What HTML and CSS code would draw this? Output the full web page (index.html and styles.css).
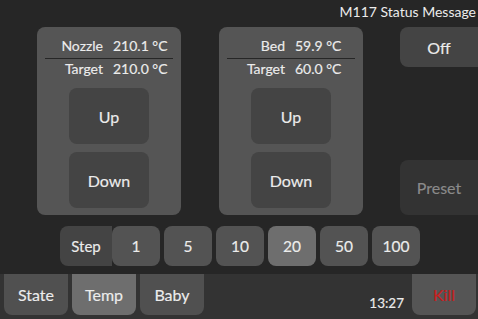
FILE: index.html
```html
<!DOCTYPE html>
<html lang="en">

<head>
    <meta charset="UTF-8" />
    <meta name="viewport" content="width=device-width, initial-scale=1.0" />
    <title>Temp</title>
    <link rel="stylesheet" href="styles.css">
</head>

<body>
    <div class="screen">
        <div class="main">
            <div class="status">M117 Status Message</div>

            <div class="content">
                <div class="panel">
                    <div class="readout">
                        <span class="label">Nozzle</span><span class="value">210.1 °C</span>
                    </div>
                    <div class="sep"></div>
                    <div class="readout">
                        <span class="label">Target</span><span class="value">210.0 °C</span>
                    </div>
                    <div class="btn big first">Up</div>
                    <div class="btn big">Down</div>
                </div>

                <div class="panel">
                    <div class="readout">
                        <span class="label">Bed</span><span class="value">59.9 °C</span>
                    </div>
                    <div class="sep"></div>
                    <div class="readout">
                        <span class="label">Target</span><span class="value">60.0 °C</span>
                    </div>
                    <div class="btn big first">Up</div>
                    <div class="btn big">Down</div>
                </div>

                <div class="side">
                    <div class="btn off">Off</div>
                    <div class="btn preset">Preset</div>
                </div>
            </div>

            <div class="steps">
                <div class="step-label">Step</div>
                <div class="btn step">1</div>
                <div class="btn step">5</div>
                <div class="btn step">10</div>
                <div class="btn step active">20</div>
                <div class="btn step">50</div>
                <div class="btn step">100</div>
            </div>
        </div>

        <!-- bottom bar -->
        <div class="bar">
            <div class="tab">State</div>
            <div class="tab active">Temp</div>
            <div class="tab">Baby</div>
            <div class="clock">13:27</div>
            <div class="tab kill">Kill</div>
        </div>
    </div>
</body>

</html>
```

FILE: styles.css
```css
* {
    box-sizing: border-box;
}

body {
    margin: 0;
    background-color: #262626;
    font-family: Lato, "Noto Sans", sans-serif;
    color: #ececec;
    overflow: hidden;
    -webkit-text-stroke: 0.15px;
}

.screen {
    width: 478px;
    height: 319px;
    display: flex;
    flex-direction: column;
}

.main {
    height: 274px;
}

.status {
    height: 27px;
    line-height: 24px;
    text-align: right;
    padding-right: 2px;
    font-size: 14px;
    -webkit-text-stroke: 0;
}

.content {
    display: flex;
    padding-left: 37px;
    gap: 38px;
    height: 188px;
}

.panel {
    width: 144px;
    background-color: #555555;
    border-radius: 8px;
    padding: 9px 8px 7px;
    display: flex;
    flex-direction: column;
    align-items: center;
}

.readout {
    display: grid;
    grid-template-columns: 58px 70px;
    column-gap: 10px;
    height: 20px;
    line-height: 20px;
    font-size: 14px;
    width: 128px;
}

.label {
    text-align: right;
}

.sep {
    width: 128px;
    height: 1px;
    margin-top: 2px;
    background-color: #262626;
}

.btn {
    display: flex;
    align-items: center;
    justify-content: center;
    border-radius: 8px;
    background-color: #444444;
}

.big {
    width: 80px;
    height: 56px;
    margin-top: 8px;
    font-size: 16px;
}

.big.first {
    margin-top: 9px;
}

.side {
    margin-left: -1px;
    width: 80px;
    display: flex;
    flex-direction: column;
    justify-content: space-between;
}

.off {
    height: 40px;
    font-size: 16px;
    border-radius: 8px 0 0 8px;
}

.preset {
    height: 55px;
    background-color: #333333;
    color: #8a8a8a;
    font-size: 16px;
    border-radius: 8px 0 0 8px;
}

/* step row */
.steps {
    display: flex;
    margin: 11px 0 0 60px;
    height: 40px;
    gap: 4px;
}

.step-label {
    width: 52px;
    margin-right: -4px;
    background-color: #444444;
    border-radius: 8px 0 0 8px;
    display: flex;
    align-items: center;
    justify-content: center;
    font-size: 15px;
}

.step {
    width: 48px;
    background-color: #535353;
    font-size: 15.5px;
}

.step.active {
    background-color: #6e6e6e;
}

/* bottom bar */
.bar {
    flex: 1;
    background-color: #333333;
    display: flex;
    padding: 0 2px 4px 4px;
    gap: 4px;
}

.tab {
    width: 64px;
    background-color: #505050;
    border-radius: 0 0 8px 8px;
    display: flex;
    align-items: center;
    justify-content: center;
    font-size: 16px;
}

.tab.active {
    background-color: #6e6e6e;
}

.clock {
    margin-left: auto;
    margin-right: 4px;
    align-self: flex-end;
    font-size: 13.5px;
    line-height: 16px;
    margin-bottom: 4px;
}

.kill {
    color: #c81e1e;
    background-color: #555555;
}
```
